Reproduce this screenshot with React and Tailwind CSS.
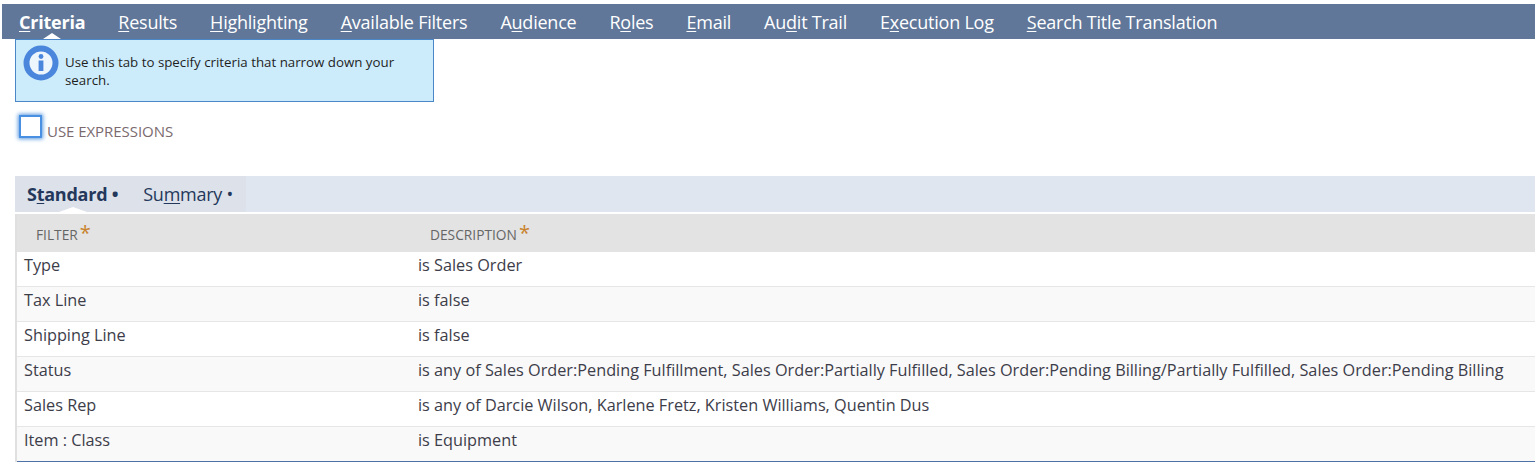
const tabs = [
  { label: 'Criteria', active: true },
  { label: 'Results' },
  { label: 'Highlighting' },
  { label: 'Available Filters' },
  { label: 'Audience', at: 1 },
  { label: 'Roles', at: 1 },
  { label: 'Email' },
  { label: 'Audit Trail', at: 2 },
  { label: 'Execution Log', at: 1 },
  { label: 'Search Title Translation' },
]

const rows = [
  ['Type', 'is Sales Order'],
  ['Tax Line', 'is false'],
  ['Shipping Line', 'is false'],
  ['Status', 'is any of Sales Order:Pending Fulfillment, Sales Order:Partially Fulfilled, Sales Order:Pending Billing/Partially Fulfilled, Sales Order:Pending Billing'],
  ['Sales Rep', 'is any of Darcie Wilson, Karlene Fretz, Kristen Williams, Quentin Dus'],
  ['Item : Class', 'is Equipment'],
]

const Hotkey = ({ label, at = 0 }) => (
  <>
    {label.slice(0, at)}
    <span className="underline underline-offset-2">{label[at]}</span>
    {label.slice(at + 1)}
  </>
)

const InfoIcon = () => (
  <svg width="36" height="36" viewBox="0 0 36 36" className="shrink-0">
    <circle cx="18" cy="18" r="14.5" fill="#eef6fd" stroke="#4a86dc" strokeWidth="6" />
    <circle cx="18" cy="11.5" r="2.4" fill="#4a86dc" />
    <rect x="15.6" y="15.5" width="4.8" height="10.5" fill="#4a86dc" />
  </svg>
)

const App = () => {
  return (
    <div className="h-[463px] w-[1535px] overflow-hidden bg-white pt-1 font-['Open_Sans',sans-serif]">
      <div className="ml-[2px] flex h-[35px] items-center gap-[33px] bg-[#607799] pl-[17px] pt-[1px] text-[18px] tracking-[-0.23px] text-white">
        {tabs.map((tab) => (
          <div key={tab.label} className={`relative flex h-full items-center ${tab.active ? 'font-bold' : ''}`}>
            <span><Hotkey label={tab.label} at={tab.at} /></span>
            {tab.active && (
              <span className="absolute bottom-0 left-[24px] h-0 w-0 border-x-[9px] border-b-[6px] border-x-transparent border-b-white" />
            )}
          </div>
        ))}
      </div>

      <div className="ml-[15px] flex h-[63px] w-[419px] border border-[#4a86c8] bg-[#cdecfb] pl-[7px] pt-[5px]">
        <InfoIcon />
        <p className="ml-[6px] mt-[8px] w-[345px] text-[13.3px] leading-[18px] text-[#1f1f1f]">
          Use this tab to specify criteria that narrow down your search.
        </p>
      </div>

      <div className="ml-[19px] mt-[13px] flex items-end">
        <div className="h-[23px] w-[23px] border-2 border-[#4a90e2] bg-white shadow-[0_0_4px_1px_#5b9be0]" />
        <span className="ml-[5px] translate-y-[3px] text-[15px] leading-[19px] tracking-[-0.05px] text-[#7a6a6e]">USE EXPRESSIONS</span>
      </div>

      <div className="ml-[15px] mt-[38px] flex h-[36px] bg-[#dfe6f0]">
        <div className="flex w-[231px] items-center gap-[25px] bg-[#dde2ea] pl-[12px] text-[18px] tracking-[-0.25px] text-[#24385b]">
          <div className="relative flex h-full items-center font-bold">
            <span><Hotkey label="Standard" at={1} /> <span className="font-bold">•</span></span>
            <span className="absolute bottom-0 left-[32px] h-0 w-0 border-x-[14px] border-b-[5px] border-x-transparent border-b-white" />
          </div>
          <span>
            <Hotkey label="Summary" at={2} /> <span>•</span>
          </span>
        </div>
      </div>

      <div className="ml-[15px] mt-[2px] border-l-2 border-[#e0e0e0]">
        <div className="flex h-[38px] items-center bg-[#e3e3e3] text-[13.75px] text-[#666666]">
          <div className="flex w-[394px] items-center pl-[19px]">
            <span className="translate-y-[2px]">FILTER</span>
            <span className="ml-[2px] text-[20px] leading-none text-[#c9822b]">*</span>
          </div>
          <div className="flex items-center pl-[19px]">
            <span className="translate-y-[2px]">DESCRIPTION</span>
            <span className="ml-[2px] text-[20px] leading-none text-[#c9822b]">*</span>
          </div>
        </div>
        {rows.map((row, i) => (
          <div
            key={row[0]}
            className={`flex h-[35px] items-center border-b pb-[7px] text-[16.25px] text-[#3d3d4a] ${i % 2 ? 'bg-[#f9f9f9]' : 'bg-white'} ${i === rows.length - 1 ? 'border-[#4f72a6]' : 'border-[#e6e6e6]'}`}
          >
            <div className="w-[401px] pl-[7px]">{row[0]}</div>
            <div>{row[1]}</div>
          </div>
        ))}
      </div>
    </div>
  )
}

export default App
